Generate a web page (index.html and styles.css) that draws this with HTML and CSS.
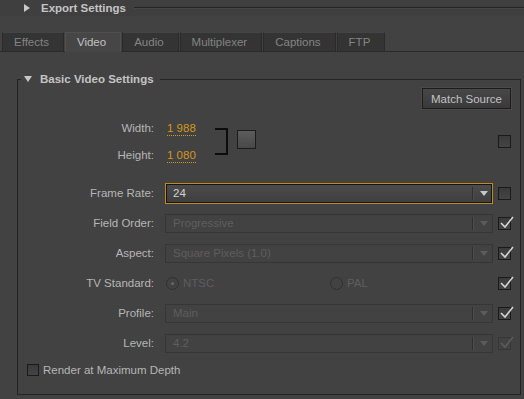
FILE: index.html
```html
<!DOCTYPE html>
<html lang="en">
<head>
    <meta charset="UTF-8">
    <title>Export Settings</title>
    <link rel="stylesheet" href="styles.css">
</head>
<body>
    <!-- Section header -->
    <div class="export-head">
        <span class="tri-right"></span>
        <span class="head-title">Export Settings</span>
        <span class="head-line"></span>
    </div>

    <!-- Tabs -->
    <div class="tabs">
        <div class="tab">Effects</div>
        <div class="tab active">Video</div>
        <div class="tab">Audio</div>
        <div class="tab">Multiplexer</div>
        <div class="tab">Captions</div>
        <div class="tab">FTP</div>
    </div>

    <!-- Basic Video Settings -->
    <fieldset class="group">
        <legend class="group-title"><span class="tri-down"></span>Basic Video Settings</legend>

        <div class="button-row">
            <button class="btn">Match Source</button>
        </div>

        <div class="dims">
            <div class="dim-labels">
                <div class="dim-row">Width:</div>
                <div class="dim-row">Height:</div>
            </div>
            <div class="dim-values">
                <div class="dim-row"><span class="value">1 988</span></div>
                <div class="dim-row"><span class="value">1 080</span></div>
            </div>
            <div class="bracket"></div>
            <div class="chain"></div>
            <span class="check dims-check"></span>
        </div>

        <div class="settings">
            <div class="row">
                <span class="label">Frame Rate:</span>
                <div class="select focus"><span class="select-text">24</span><span class="arrow"></span></div>
                <span class="check"></span>
            </div>
            <div class="row">
                <span class="label">Field Order:</span>
                <div class="select disabled"><span class="select-text">Progressive</span><span class="arrow"></span></div>
                <span class="check checked"><svg viewBox="0 0 15 14"><polyline points="2,7 6,11 14,1"/></svg></span>
            </div>
            <div class="row">
                <span class="label">Aspect:</span>
                <div class="select disabled"><span class="select-text">Square Pixels (1.0)</span><span class="arrow"></span></div>
                <span class="check checked"><svg viewBox="0 0 15 14"><polyline points="2,7 6,11 14,1"/></svg></span>
            </div>
            <div class="row">
                <span class="label">TV Standard:</span>
                <div class="radios">
                    <span class="radio-item"><span class="radio on"></span>NTSC</span>
                    <span class="radio-item"><span class="radio"></span>PAL</span>
                </div>
                <span class="check checked"><svg viewBox="0 0 15 14"><polyline points="2,7 6,11 14,1"/></svg></span>
            </div>
            <div class="row">
                <span class="label">Profile:</span>
                <div class="select disabled"><span class="select-text">Main</span><span class="arrow"></span></div>
                <span class="check checked"><svg viewBox="0 0 15 14"><polyline points="2,7 6,11 14,1"/></svg></span>
            </div>
            <div class="row">
                <span class="label">Level:</span>
                <div class="select disabled"><span class="select-text">4.2</span><span class="arrow"></span></div>
                <span class="check checked dim"><svg viewBox="0 0 15 14"><polyline points="2,7 6,11 14,1"/></svg></span>
            </div>
        </div>

        <div class="render">
            <span class="check"></span>
            <span>Render at Maximum Depth</span>
        </div>
    </fieldset>
</body>
</html>
```

FILE: styles.css
```css
* {
    margin: 0;
    padding: 0;
    box-sizing: border-box;
}

html {
    background-color: #424242;
}

body {
    width: 524px;
    height: 399px;
    overflow: hidden;
    font-family: 'Liberation Sans', Arial, sans-serif;
    font-size: 11.5px;
    color: #b6b6b6;
}

/* Section header */
.export-head {
    display: flex;
    align-items: center;
    height: 16px;
    background-color: #3f3f3f;
}

.tri-right {
    width: 0;
    height: 0;
    margin-left: 24px;
    border-top: 4px solid transparent;
    border-bottom: 4px solid transparent;
    border-left: 6px solid #c8c8c8;
}

.head-title {
    margin-left: 11px;
    font-weight: bold;
    color: #c4c4c4;
}

.head-line {
    flex: 1;
    height: 2px;
    margin-left: 8px;
    border-top: 1px solid #242424;
    border-bottom: 1px solid #474747;
}

/* Tabs */
.tabs {
    display: flex;
    gap: 1px;
    margin-top: 16px;
    padding-left: 2px;
    border-bottom: 1px solid #2a2a2a;
}

.tab {
    height: 19px;
    line-height: 18px;
    padding: 0 14px 0 11px;
    background-color: #343434;
    border: 1px solid #2a2a2a;
    border-top-color: #444;
    border-bottom: none;
    color: #848484;
}

.tab.active {
    background-color: #464646;
    border-color: #505050;
    color: #c2c2c2;
    margin-bottom: -1px;
    height: 20px;
}

/* Group box */
.group {
    margin: 20px 0 0 17px;
    width: 503px;
    padding: 0 9px 12px 9px;
    border: 1px solid #232323;
}

.group-title {
    display: flex;
    align-items: center;
    margin-left: -6px;
    padding: 0 6px 0 3px;
    line-height: 14px;
    font-weight: bold;
    color: #c4c4c4;
}

.tri-down {
    width: 0;
    height: 0;
    margin-right: 8px;
    border-left: 4px solid transparent;
    border-right: 4px solid transparent;
    border-top: 6px solid #c8c8c8;
}

.button-row {
    display: flex;
    justify-content: flex-end;
    margin-top: 2px;
}

.btn {
    width: 89px;
    height: 21px;
    font-family: inherit;
    font-size: 11.5px;
    color: #c2c2c2;
    background: linear-gradient(#474747, #3a3a3a);
    border: 1px solid #1c1c1c;
    box-shadow: 0 0 0 1px #4a4a4a;
}

/* Width / Height */
.dims {
    display: flex;
    align-items: flex-start;
    margin-top: 9px;
    margin-left: -9px;
}

.dim-labels {
    width: 136px;
    text-align: right;
}

.dim-row {
    height: 20px;
    line-height: 20px;
}

.dim-row + .dim-row {
    margin-top: 7px;
}

.dim-values {
    width: 47px;
    margin-left: 13px;
}

.value {
    color: #d4961e;
    border-bottom: 1px dotted #d4961e;
    padding-bottom: 1px;
}

.bracket {
    width: 13px;
    height: 27px;
    margin-top: 10px;
    margin-left: 1px;
    border: 2px solid #0c0c0c;
    border-left: none;
}

.chain {
    width: 19px;
    height: 19px;
    margin-top: 12px;
    margin-left: 9px;
    background: linear-gradient(#5c5c5c, #484848);
    border: 1px solid #1c1c1c;
}

/* Setting rows */
.settings {
    margin-top: 13px;
    margin-left: -9px;
}

.row {
    display: flex;
    align-items: center;
    height: 30px;
}

.label {
    width: 136px;
    margin-right: 11px;
    text-align: right;
}

.select {
    display: flex;
    align-items: center;
    width: 328px;
    height: 19px;
    border: 1px solid #363636;
}

.select.focus {
    height: 21px;
    border: 1px solid #c08a1c;
    box-shadow: inset 0 0 0 1px #151515;
    background: linear-gradient(#4c4c4c, #3e3e3e);
    color: #d2d2d2;
}

.select.disabled {
    color: #5e5e5e;
}

.select-text {
    flex: 1;
    padding-left: 7px;
}

.arrow {
    width: 20px;
    height: 13px;
    position: relative;
    border-left: 1px solid #303030;
    box-shadow: inset 1px 0 0 #4c4c4c;
}

.arrow::after {
    content: '';
    position: absolute;
    left: 7px;
    top: 4px;
    border-left: 4px solid transparent;
    border-right: 4px solid transparent;
    border-top: 5px solid #c8c8c8;
}

.select.disabled .arrow::after {
    border-top-color: #5c5c5c;
}

/* Check boxes */
.check {
    position: relative;
    flex: none;
    width: 13px;
    height: 13px;
    margin-left: 5px;
    background: linear-gradient(#3a3a3a, #444);
    border: 1px solid #1a1a1a;
}

.dims .dims-check {
    margin-top: 17px;
    margin-left: auto;
}

.check svg {
    position: absolute;
    left: 0;
    top: -2px;
    width: 15px;
    height: 14px;
    fill: none;
    stroke: #d4d4d4;
    stroke-width: 1.6;
}

.check.dim {
    border-color: #363636;
    background: #424242;
}

.check.dim svg {
    stroke: #5c5c5c;
}

/* Radios */
.radios {
    display: grid;
    grid-template-columns: 164px 164px;
    width: 328px;
    color: #5e5e5e;
}

.radio-item {
    display: flex;
    align-items: center;
    padding-left: 1px;
}

.radio {
    width: 13px;
    height: 13px;
    margin-right: 4px;
    border-radius: 50%;
    border: 1px solid #303030;
    position: relative;
}

.radio.on::after {
    content: '';
    position: absolute;
    left: 4px;
    top: 4px;
    width: 3px;
    height: 3px;
    border-radius: 50%;
    background-color: #666;
}

/* Render checkbox */
.render {
    display: flex;
    align-items: center;
    height: 24px;
}

.render .check {
    width: 12px;
    height: 12px;
    margin-left: 0;
    margin-right: 4px;
}
```
